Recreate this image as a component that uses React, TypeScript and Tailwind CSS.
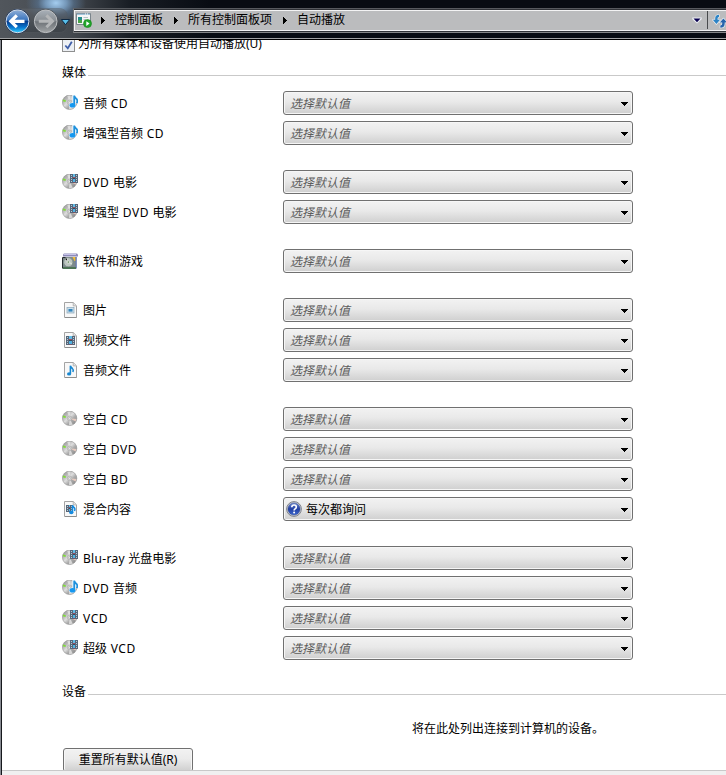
import React from "react";

type IconKind = "audioDisc" | "videoDisc" | "software" | "picture" | "video" | "audio" | "disc" | "mixed";

function DiscShape() {
  return (
    <>
      <defs>
        <linearGradient id="disc" x1="0" y1="0" x2="1" y2="1">
          <stop offset="0" stopColor="#8f8f8f" />
          <stop offset=".28" stopColor="#b8b8b8" />
          <stop offset=".45" stopColor="#dedede" />
          <stop offset=".62" stopColor="#adadad" />
          <stop offset="1" stopColor="#808080" />
        </linearGradient>
      </defs>
      <circle cx="7.6" cy="7.3" r="7.2" fill="url(#disc)" stroke="#929292" strokeWidth=".6" />
      <path d="M7.6 7.3 5.2.8 8.4.4Z" fill="#eee" opacity=".65" />
      <path d="M7.6 7.3 7 14.3 10.8 13.7Z" fill="#f4f4f4" opacity=".65" />
      <path d="M7.6 7.3 14.4 8 13.6 10.4Z" fill="#e6cabf" />
      <path d="M1 4.5 3.9 5.2 3.5 6.9.8 6.3Z" fill="#80db3a" />
      <circle cx="7.6" cy="7.3" r="2.3" fill="#d6d6d6" stroke="#a5a5a5" strokeWidth=".6" />
      <circle cx="7.6" cy="7.3" r=".9" fill="#fff" stroke="#888" strokeWidth=".4" />
    </>
  );
}

function Page() {
  return (
    <>
      <path d="M2.5.5h8.7l3.3 3.3v11.7h-12Z" fill="#f8f8f8" stroke="#a4a4a4" />
      <path d="M11.2.7v3.2h3.2" fill="#e3e3e3" stroke="#a9a9a9" strokeWidth=".8" />
      <path d="M3 15.5h11.5" stroke="#8d8d8d" />
    </>
  );
}

/* Film strip on the pixel grid: perforations beside two frames. */
function Film({ x, y, w, h }: { x: number; y: number; w: number; h: number }) {
  const holes: number[] = [];
  for (let row = 1; row < h - 1; row += 2) holes.push(row);
  const half = Math.floor(h / 2);
  return (
    <g transform={`translate(${x} ${y})`} shapeRendering="crispEdges">
      <rect width={w} height={h} fill="#56677a" />
      {holes.map((row) => (
        <g key={row} fill="#b9c8d4">
          <rect x="1" y={row} width="1" height="1" />
          <rect x={w - 2} y={row} width="1" height="1" />
        </g>
      ))}
      <rect x="3" y="0" width={w - 6} height={half - 1} fill="#62bce6" />
      <rect x="3" y={half - 1} width={w - 6} height="1" fill="#a04c62" />
      <rect x="3" y={half} width={w - 6} height="1" fill="#3d4756" />
      <rect x="3" y={half + 1} width={w - 6} height={h - half - 2} fill="#4fb2e2" />
      <rect x="3" y={h - 1} width={w - 6} height="1" fill="#7a5266" />
    </g>
  );
}

function MediaIcon({ kind }: { kind: IconKind }) {
  const raised = kind === "disc" || kind === "audioDisc" || kind === "videoDisc";
  return (
    <svg className={raised ? "mb-px h-4 w-4 shrink-0" : "h-4 w-4 shrink-0"} viewBox="0 0 16 16">
      {raised && <DiscShape />}
      {kind === "audioDisc" && (
        <g>
          <path d="M11.8 9.5V1.5q.8 1.4 2 2 2 1.8.8 4.8" fill="none" stroke="#e1f2fd" strokeWidth="3.2" />
          <ellipse cx="10.4" cy="10.2" rx="3.3" ry="2.7" fill="#e1f2fd" />
          <path d="M12.2 9.8V.8q.5 1.8 2 2.9 2 1.7.5 4.5" fill="none" stroke="#1e90dc" strokeWidth="1.7" />
          <ellipse cx="10.5" cy="10.2" rx="2.9" ry="2.3" fill="#1597ef" />
        </g>
      )}
      {kind === "videoDisc" && <Film x={8} y={0} w={8} h={9} />}
      {kind === "software" && (
        <g>
          <path d="M1 1.6 2 .5h13l1 1.1v2H1Z" fill="#8e8bb9" />
          <path d="M2 1.5h12" stroke="#c6c4e8" />
          <rect x="1" y="4" width="13" height="12" fill="#7c898d" />
          <path d="M.5 15.5v-11h3" fill="none" stroke="#262c2e" />
          <path d="M10.5 4h3v4h-1Z" fill="#f3bc35" />
          <path d="M14.2 4v11.5" stroke="#6376ae" strokeWidth="1.2" />
          <circle cx="6.3" cy="9.2" r="4.6" fill="#bcc4c0" stroke="#778780" strokeWidth=".7" />
          <path d="m3 6.5 3 2.5-1-4m1 4 4 2" stroke="#e5ece7" strokeWidth=".9" />
          <circle cx="6.4" cy="9.1" r="1.3" fill="#7e9b78" stroke="#fff" strokeWidth=".5" />
          <path d="M1 14h13v2H1Z" fill="#4d7355" />
        </g>
      )}
      {kind === "picture" && (
        <g>
          <Page />
          <rect x="5" y="5.5" width="7" height="5.5" fill="#cddfeb" stroke="#92adbf" strokeWidth=".8" />
          <rect x="6.5" y="7" width="4" height="2.6" fill="#3486bd" />
        </g>
      )}
      {kind === "video" && (
        <g>
          <Page />
          <Film x={4} y={4} w={9} h={9} />
        </g>
      )}
      {kind === "audio" && (
        <g>
          <Page />
          <path d="M8.4 11.8V3.8q.5 1.6 2 2.7 1.5 1.3.5 3.5" fill="none" stroke="#1686d0" strokeWidth="1.6" />
          <ellipse cx="7.1" cy="11.9" rx="2.1" ry="1.7" fill="#1686d0" />
        </g>
      )}
      {kind === "mixed" && (
        <g>
          <Page />
          <Film x={4} y={4} w={7} h={7} />
          <path d="M10.5 11.5V4.2q.4 1.5 1.7 2.4 1.2 1.1.3 3.5" fill="none" stroke="#158be0" strokeWidth="1.5" />
          <ellipse cx="9.3" cy="11.5" rx="2.2" ry="1.8" fill="#158be0" />
        </g>
      )}
    </svg>
  );
}

const groups: { label: string; icon: IconKind; ask?: boolean }[][] = [
  [
    { label: "音频 CD", icon: "audioDisc" },
    { label: "增强型音频 CD", icon: "audioDisc" },
  ],
  [
    { label: "DVD 电影", icon: "videoDisc" },
    { label: "增强型 DVD 电影", icon: "videoDisc" },
  ],
  [{ label: "软件和游戏", icon: "software" }],
  [
    { label: "图片", icon: "picture" },
    { label: "视频文件", icon: "video" },
    { label: "音频文件", icon: "audio" },
  ],
  [
    { label: "空白 CD", icon: "disc" },
    { label: "空白 DVD", icon: "disc" },
    { label: "空白 BD", icon: "disc" },
    { label: "混合内容", icon: "mixed", ask: true },
  ],
  [
    { label: "Blu-ray 光盘电影", icon: "videoDisc" },
    { label: "DVD 音频", icon: "audioDisc" },
    { label: "VCD", icon: "videoDisc" },
    { label: "超级 VCD", icon: "videoDisc" },
  ],
];

/* Latin runs are tracked slightly wider than the ideographs around them. */
function Label({ text }: { text: string }) {
  return (
    <span className="mt-[2px] ml-[5px] w-[200px] whitespace-pre">
      {text.split(/([A-Za-z-]+ ?| [A-Za-z-]+ ?)/).map((part, i) =>
        /[A-Za-z]/.test(part) ? (
          <span className={part.length > 5 ? "tracking-[0.3px]" : "tracking-[0.55px]"} key={i}>{part}</span>
        ) : (
          part
        ),
      )}
    </span>
  );
}

function Select({ ask }: { ask?: boolean }) {
  return (
    <button className="flex h-6 w-[350px] items-center rounded-[3px] border border-[#707070] bg-linear-to-b from-[#f2f2f2] from-0% via-[#e9e9e9] via-45% to-[#cfcfcf] to-100% pr-1 pl-[6px] text-left shadow-[inset_0_0_0_1px_#f6f6f6]">
      {ask ? (
        <span className="-ml-[4px] flex items-center gap-1">
          <svg className="h-4 w-4" viewBox="0 0 16 16">
            <defs>
              <linearGradient id="help" x1="0" y1="0" x2="0" y2="1">
                <stop offset="0" stopColor="#6e8ad2" />
                <stop offset=".5" stopColor="#213fa3" />
                <stop offset="1" stopColor="#3b66ce" />
              </linearGradient>
            </defs>
            <circle cx="8" cy="8" r="7.4" fill="#d4d7df" stroke="#74777f" strokeWidth=".9" />
            <circle cx="8" cy="8" r="6.1" fill="url(#help)" stroke="#2c4286" strokeWidth=".5" />
            <path d="M5.8 6.2Q5.8 4 8.1 4q2.2 0 2.2 1.9 0 1.1-1.2 1.9-1 .7-1 1.6" fill="none" stroke="#fff" strokeWidth="1.6" />
            <circle cx="8.1" cy="11.6" r="1" fill="#fff" />
          </svg>
          <span className="mt-[2px]">每次都询问</span>
        </span>
      ) : (
        <span className="mt-px text-[#5c5c5c] italic">选择默认值</span>
      )}
      <svg className="mt-[2px] ml-auto h-1 w-[7px]" viewBox="0 0 7 4" shapeRendering="crispEdges">
        <path d="M0 0h7v1H6v1H5v1H4v1H3V3H2V2H1V1H0Z" />
      </svg>
    </button>
  );
}

function Arrow() {
  return (
    <svg className="h-[7px] w-1" viewBox="0 0 4 7" shapeRendering="crispEdges">
      <path d="M0 0h1v1h1v1h1v1h1v1H3v1H2v1H1v1H0Z" />
    </svg>
  );
}

function NavButtons() {
  return (
    <svg className="h-[38px] w-[73px] shrink-0" viewBox="0 0 73 38">
      <defs>
        <linearGradient id="back" x1="0" y1="0" x2="0" y2="1">
          <stop offset="0" stopColor="#91afd7" />
          <stop offset=".45" stopColor="#3773bd" />
          <stop offset=".5" stopColor="#063a8c" />
          <stop offset=".75" stopColor="#0873cc" />
          <stop offset="1" stopColor="#33ceff" />
        </linearGradient>
        <linearGradient id="forward" x1="0" y1="0" x2="0" y2="1">
          <stop offset="0" stopColor="#a8b0b8" />
          <stop offset=".48" stopColor="#898e93" />
          <stop offset=".52" stopColor="#6d7277" />
          <stop offset="1" stopColor="#a1a4a6" />
        </linearGradient>
        <linearGradient id="tray" x1="0" y1="0" x2="0" y2="1">
          <stop offset="0" stopColor="#656a70" />
          <stop offset="1" stopColor="#343a40" />
        </linearGradient>
      </defs>
      <path d="M17 8.5h42q6 0 8 5v14q-2 5-8 5H17A12 12 0 0 1 17 8.5Z" fill="url(#tray)" stroke="#54595f" strokeWidth=".8" opacity=".5" />
      <circle cx="17.5" cy="21.3" r="12.3" fill="#1e355b" />
      <circle cx="17.5" cy="21.3" r="11.4" fill="url(#back)" stroke="#d2dce9" strokeWidth="1" />
      <path d="m16.8 15.4-6 5.9 6 5.9M12 21.3h12.5" fill="none" stroke="#fff" strokeWidth="3.2" />
      <circle cx="45.7" cy="21.3" r="12.2" fill="#4c5156" />
      <circle cx="45.7" cy="21.3" r="11.3" fill="url(#forward)" stroke="#bdc0c3" strokeWidth="1" />
      <path d="m46.4 15.4 6 5.9-6 5.9M51.2 21.3H38.8" fill="none" stroke="#b4b6b8" strokeWidth="3" />
      <path d="M61.3 19.5h8.4L65.5 24.7Z" fill="#58bee9" stroke="#102943" />
    </svg>
  );
}

function AddressBar() {
  return (
    <div className="mt-2 flex h-[25px] min-w-0 flex-1 border-y border-l border-t-[#575a5f] border-b-[#858789] border-l-[#6f7276] bg-[#303338] pt-px pb-px">
      <div className="flex min-w-0 flex-1 items-center border border-r-0 border-[#f3f3f4] bg-[#bbbcbe] pb-px">
        <svg className="ml-px h-4 w-4 shrink-0" viewBox="0 0 16 16">
          <path d="M.5 1.5h14v11H.5Z" fill="#f5f6f7" stroke="#7b858c" />
          <path d="M1 2.2h13" stroke="#8db7d3" strokeWidth="1.2" />
          <path d="M9 2h4" stroke="#fff" strokeDasharray="1 1" />
          <path d="M2 5h4v5H2Z" fill="#238c8a" />
          <path d="M2 8h4v3H2Z" fill="#48a449" />
          <path d="M7.5 5.5H12m-4.5 2H10" stroke="#b7c3ca" />
          <circle cx="11.5" cy="11.6" r="4" fill="#21a62a" stroke="#16831c" strokeWidth=".6" />
          <path d="m10.3 9.2 3.3 2.4-3.3 2.4Z" fill="#fff" />
        </svg>
        <span className="ml-[9px] flex"><Arrow /></span>
        <span className="ml-[10px] whitespace-nowrap">控制面板</span>
        <span className="ml-[11px] flex"><Arrow /></span>
        <span className="ml-[10px] whitespace-nowrap">所有控制面板项</span>
        <span className="ml-[11px] flex"><Arrow /></span>
        <span className="ml-[10px] whitespace-nowrap">自动播放</span>
        <svg className="mr-[5px] ml-auto h-[7px] w-[10px]" viewBox="0 0 10 7">
          <path d="M.3.5h9.4v1.8L5 6.6.3 2.3Z" fill="#eef0f5" />
          <path d="M1.5 1.5h7L5 5.2Z" fill="#090051" />
        </svg>
        <div className="h-full w-[19px] overflow-hidden border-l border-[#484a4d] pt-[3px] pl-[4px]">
          <svg className="h-[15px] w-[16px] max-w-none" viewBox="0 0 16 15">
            <g stroke="#eff3f7" strokeWidth="1.2" paintOrder="stroke" strokeLinejoin="round">
              <path d="M7 .8Q3.2 1 3.2 4.3v1.5H.8L4.4 10 8 5.8H5.6V4.3q0-1 1.4-1.2Z" fill="#2c83c5" />
              <path d="M8.3 13.7q4.4 0 4.4-3.9V8.5h2.3l-3.6-4.1-3.6 4.1h2.4v1.3q0 1.5-1.9 1.7Z" fill="#2864ac" />
            </g>
          </svg>
        </div>
      </div>
    </div>
  );
}

function Section({ title }: { title: string }) {
  return (
    <div className="flex h-4 items-center gap-[2px] pl-[60px]">
      <h2 className="leading-4">{title}</h2>
      <div className="mt-[5px] h-px flex-1 bg-[#c9c9c9]" />
    </div>
  );
}

export default function App() {
  return (
    <div className="flex h-[775px] w-[726px] flex-col overflow-hidden bg-white font-['Noto_Sans','Noto_Sans_CJK_SC',sans-serif] text-[12px] leading-4 text-black">
      <header className="flex h-10 shrink-0 border-b border-black bg-[radial-gradient(ellipse_30px_20px_at_56px_3px,#a4cdf0_0%,#7fa8cfd0_35%,#587594a0_60%,transparent_100%),linear-gradient(90deg,#51565c_0px,#454a50_70px,#181d24_130px,#080c13_210px)]">
        <div className="flex h-[39px] w-full border-b border-[#a2a3a5]">
          <NavButtons />
          <AddressBar />
        </div>
      </header>
      <div className="flex h-[735px] border-l border-[#888b92]">
        <main className="flex min-w-0 flex-1 flex-col border-l border-[#16181c] bg-white">
          <div className="flex h-[25px] shrink-0 items-start overflow-hidden pl-[60px]">
            <div className="-mt-[4px] flex items-start">
              <span className="mt-[3px] flex h-[13px] w-[13px] items-center justify-center border border-[#8e8f8f] bg-[#edf0f4]">
                <svg className="h-[9px] w-[9px]" viewBox="0 0 9 9"><path d="M1.3 4.5 3.8 7.3 7.8.8" fill="none" stroke="#405fa8" strokeWidth="1.8" /></svg>
              </span>
              <span className="ml-[3px] whitespace-nowrap">为所有媒体和设备使用自动播放(U)</span>
            </div>
          </div>
          <Section title="媒体" />
          <div className="mt-[10px] flex flex-col gap-[25px] pl-[60px]">
            {groups.map((rows, i) => (
              <div className="flex flex-col gap-[6px]" key={i}>
                {rows.map((row) => (
                  <div className="flex h-6 items-center" key={row.label}>
                    <MediaIcon kind={row.icon} />
                    <Label text={row.label} />
                    <Select ask={row.ask} />
                  </div>
                ))}
              </div>
            ))}
          </div>
          <div className="mt-6"><Section title="设备" /></div>
          <p className="mt-[21px] pl-[410px]">将在此处列出连接到计算机的设备。</p>
          <div className="mt-auto flex h-[22px] shrink-0 overflow-hidden pl-[61px]">
            <button className="flex h-6 w-[130px] items-center justify-center rounded-[3px] border border-[#707070] bg-linear-to-b from-[#f2f2f2] via-[#ebebeb] via-45% to-[#cfcfcf] shadow-[inset_0_0_0_1px_#f6f6f6]">重置所有默认值(R)</button>
          </div>
          <footer className="h-[5px] shrink-0 border-t border-[#c9c9c9] bg-[#f0f0f0]" />
        </main>
      </div>
    </div>
  );
}
